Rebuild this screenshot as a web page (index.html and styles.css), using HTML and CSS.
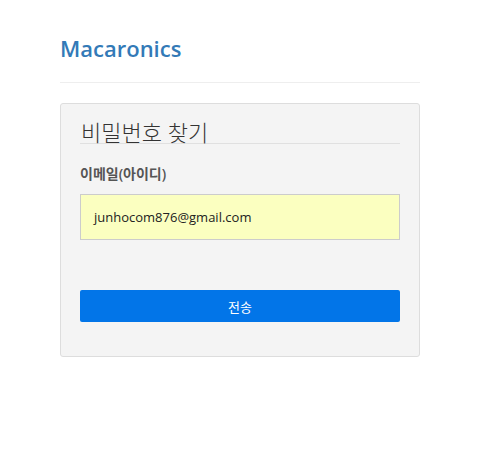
FILE: index.html
```html
<!DOCTYPE html>
<html lang="ko">
<head>
<meta charset="utf-8">
<link rel="stylesheet" href="styles.css">
</head>
<body>
<div class="container">
  <h1 class="brand">Macaronics</h1>
  <hr class="divider">
  <div class="panel">
    <h2 class="legend">비밀번호 찾기</h2>
    <label class="label">이메일(아이디)</label>
    <div class="input">junhocom876@gmail.com</div>
    <button class="btn">전송</button>
  </div>
</div>
</body>
</html>
```
FILE: styles.css
```css
* { box-sizing: border-box; }
body {
  margin: 0;
  background: #fff;
  font-family: "Open Sans", "Noto Sans CJK KR", sans-serif;
  color: #333;
}
.container {
  width: 360px;
  margin: 0 0 0 60px;
  padding-top: 34px;
}
.brand {
  margin: 0;
  font-size: 22px;
  line-height: 29px;
  font-weight: 600;
  color: #337ab7;
}
.divider {
  margin: 19px 0 20px;
  border: 0;
  border-top: 1px solid #eee;
}
.panel {
  background: #f4f4f4;
  border: 1px solid #ddd;
  border-radius: 3px;
  padding: 16px 19px 34px;
  display: flex;
  flex-direction: column;
}
.legend {
  margin: 0;
  font-size: 22px;
  font-weight: 300;
  line-height: 24px;
  color: #333;
  border-bottom: 1px solid #e0e0e0;
  height: 24px;
  padding-left: 1px;
}
.label {
  margin-top: 21px;
  font-size: 14px;
  font-weight: 600;
  color: #555;
  line-height: 17px;
}
.input {
  margin-top: 12px;
  height: 46px;
  background: #fbffc0;
  border: 1px solid #ccc;
  padding: 0 13px;
  display: flex;
  align-items: center;
  font-size: 13px;
  color: #222;
}
.btn {
  margin-top: 50px;
  height: 32px;
  border: 0;
  border-radius: 2px;
  background: #0275e8;
  color: #fff;
  font-family: inherit;
  font-size: 13px;
}
```
